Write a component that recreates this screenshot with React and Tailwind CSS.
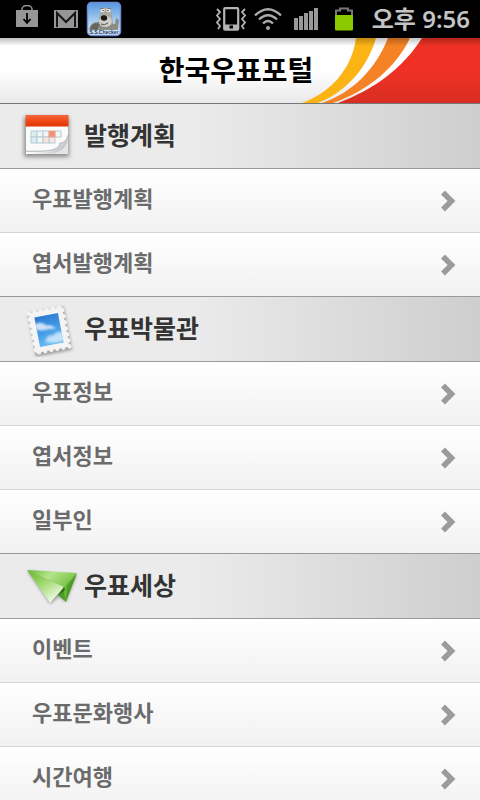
const sections = [
  { title: "발행계획", icon: CalendarIcon, items: ["우표발행계획", "엽서발행계획"] },
  { title: "우표박물관", icon: StampIcon, items: ["우표정보", "엽서정보", "일부인"] },
  { title: "우표세상", icon: PlaneIcon, items: ["이벤트", "우표문화행사", "시간여행"] },
];

function CalendarIcon() {
  return (
    <svg viewBox="0 0 56 56" className="size-14" aria-hidden="true">
      <defs>
        <linearGradient id="calTop" x1="0" y1="0" x2="0" y2="1">
          <stop offset="0" stopColor="#f4683f" />
          <stop offset="0.5" stopColor="#f04a18" />
          <stop offset="1" stopColor="#e23304" />
        </linearGradient>
        <linearGradient id="calCurl" x1="0" y1="0" x2="1" y2="0.4">
          <stop offset="0.4" stopColor="#ffffff" />
          <stop offset="1" stopColor="#c3c8ca" />
        </linearGradient>
        <filter id="calShadow" x="-20%" y="-20%" width="140%" height="150%">
          <feGaussianBlur stdDeviation="2" />
        </filter>
      </defs>
      <rect x="4" y="9" width="45" height="40" fill="#666" opacity="0.7" filter="url(#calShadow)" />
      <rect x="6" y="8" width="42" height="38" fill="#e3e6e7" />
      <path d="M6 18H48V31Q44 42 30 42H6Z" fill="#fafafa" />
      <path d="M6 43Q24 44 34 41Q40 39 40 35Q46 35 48 27V32Q45 46 24 46H6Z" fill="url(#calCurl)" />
      <path d="M6 43.500Q26 44 35 41Q40 39 40 35Q46 35 48 27" fill="none" stroke="#aeb6ba" strokeWidth="0.8" />
      <rect x="5.500" y="7" width="43" height="11.500" rx="0.5" fill="url(#calTop)" />
      <g fill="#f2f6f7" stroke="#b4cdd4" strokeWidth="1">
        <rect x="11" y="23" width="6" height="6" fill="#dbeef2" />
        <rect x="17" y="23" width="6" height="6" />
        <rect x="23" y="23" width="6" height="6" />
        <rect x="35" y="23" width="6" height="6" />
        <rect x="11" y="29" width="6" height="6" fill="#dbeef2" />
        <rect x="17" y="29" width="6" height="6" />
        <rect x="23" y="29" width="6" height="6" fill="#fae3dd" />
        <rect x="29" y="29" width="6" height="6" fill="#fae3dd" />
      </g>
      <rect x="29" y="23" width="6" height="6" fill="#f58f73" stroke="#e9a28e" strokeWidth="0.8" />
    </svg>
  );
}

function StampIcon() {
  return (
    <svg viewBox="0 0 56 56" className="size-14" aria-hidden="true">
      <defs>
        <linearGradient id="sky" x1="0" y1="0" x2="0.2" y2="1">
          <stop offset="0" stopColor="#2a78d0" />
          <stop offset="0.6" stopColor="#459ce6" />
          <stop offset="1" stopColor="#69bbf2" />
        </linearGradient>
        <filter id="stampShadow" x="-20%" y="-20%" width="140%" height="150%">
          <feGaussianBlur stdDeviation="1.8" />
        </filter>
        <filter id="cloud">
          <feGaussianBlur stdDeviation="0.9" />
        </filter>
        <clipPath id="skyClip">
          <rect x="17" y="14" width="24" height="30" />
        </clipPath>
      </defs>
      <g transform="rotate(-11 29 29)">
        <rect x="11" y="9" width="37" height="44" fill="#666" opacity="0.55" filter="url(#stampShadow)" />
        <rect x="12" y="9" width="34" height="40" fill="#f4f4f4" />
        <rect
          x="12"
          y="9"
          width="34"
          height="40"
          fill="none"
          stroke="#f4f4f4"
          strokeWidth="4.2"
          strokeLinecap="round"
          strokeDasharray="0.1 6.07"
        />
        <rect x="17" y="14" width="24" height="30" fill="url(#sky)" />
        <g clipPath="url(#skyClip)">
          <g fill="#fff" filter="url(#cloud)">
            <path d="M16 21Q23 18 27 24Q33 24 36 29L28 28Q21 29 16 26Z" opacity="0.75" />
            <path d="M23 40Q26 33 32 35Q36 31 42 34V42Q33 44 23 40Z" opacity="0.6" />
          </g>
        </g>
      </g>
    </svg>
  );
}

function PlaneIcon() {
  return (
    <svg viewBox="0 0 60 56" className="-mr-1 h-14 w-15" aria-hidden="true">
      <defs>
        <linearGradient id="wing" x1="0" y1="0" x2="1" y2="0.4">
          <stop offset="0" stopColor="#69b92e" />
          <stop offset="0.5" stopColor="#b4e58b" />
          <stop offset="1" stopColor="#7cc548" />
        </linearGradient>
        <linearGradient id="body" x1="0" y1="0" x2="0.7" y2="1">
          <stop offset="0" stopColor="#63b428" />
          <stop offset="0.5" stopColor="#a3db72" />
          <stop offset="1" stopColor="#f4fced" />
        </linearGradient>
        <filter id="planeShadow" x="-20%" y="-20%" width="140%" height="150%">
          <feGaussianBlur stdDeviation="1.8" />
        </filter>
      </defs>
      <path d="M7 13L57 17L46 44L39 39L30 46Z" fill="#555" opacity="0.5" filter="url(#planeShadow)" />
      <path d="M57 15L46 44L38 37L43 29Z" fill="#4d9c25" />
      <path d="M57 15L47 28L46 44L43 30Z" fill="#6cb73c" />
      <path d="M7 12L57 15L44 29Z" fill="url(#wing)" />
      <path d="M7 12L44 29L30 45Z" fill="url(#body)" />
      <path d="M44 29L45 32L38 38Z" fill="#276e0c" />
    </svg>
  );
}

function Swoosh() {
  return (
    <svg viewBox="0 0 180 65" preserveAspectRatio="none" className="h-full w-45" aria-hidden="true">
      <defs>
        <linearGradient id="red" x1="0" y1="0" x2="0" y2="1">
          <stop offset="0.5" stopColor="#ee3124" />
          <stop offset="1" stopColor="#d92e22" />
        </linearGradient>
      </defs>
      <path d="M56 0H76C68 28 48 53 18 65H2C32 54 52 30 56 0Z" fill="#fbb414" />
      <path d="M88 0H110C95 31 67 53 33 65H22C54 54 76 30 88 0Z" fill="#f58225" />
      <path d="M122 0H180V65H38C75 51 103 30 122 0Z" fill="url(#red)" />
    </svg>
  );
}

function StatusBar() {
  return (
    <div className="flex h-[38px] shrink-0 items-center justify-between bg-black pr-2.5 pl-4 text-[#c4c4c4]">
      <div className="flex items-center gap-4">
        <svg viewBox="0 0 22 28" className="h-7 w-[22px]" aria-label="다운로드">
          <path d="M6 6V4a5 3.500 0 0 1 10 0v2" fill="none" stroke="#969696" strokeWidth="1.5" />
          <path d="M0 5H22V22H0Z" fill="#969696" />
          <path d="M11 8V17M7.500 14L11 18L14.500 14" fill="none" stroke="#000" strokeWidth="1.8" />
        </svg>
        <svg viewBox="0 0 24 18" className="h-[18px] w-6" aria-label="메일">
          <rect width="24" height="18" fill="#969696" />
          <path d="M3 17V3L12 12L21 3V17" fill="none" stroke="#161616" strokeWidth="2" />
        </svg>
        <svg viewBox="0 0 36 36" className="-ml-2 size-9" aria-label="S.S.Checker">
          <defs>
            <linearGradient id="appBg" x1="0" y1="0" x2="0" y2="1">
              <stop offset="0" stopColor="#5797dd" />
              <stop offset="0.7" stopColor="#bcdcf5" />
              <stop offset="1" stopColor="#dcecf8" />
            </linearGradient>
          </defs>
          <rect x="1.500" y="1.500" width="33" height="33" rx="4" fill="url(#appBg)" stroke="#6b8ad6" strokeWidth="1.5" />
          <path d="M3 28Q5 20 13 21L25 22L29 23L30 17L33 19L32 29H3Z" fill="#8d8b86" />
          <path d="M4 28Q7 20 14 23L11 29Z" fill="#66645f" />
          <path d="M14 14Q13 7 19 7Q25 7 26 14L27 22Q22 28 14 24Q11 19 14 14Z" fill="#a9a7a2" />
          <path d="M13 19Q15 15 19 15Q25 15 26 20Q25 26 19 26Q13 26 13 19Z" fill="#cfcdc7" />
          <circle cx="16.500" cy="9" r="2.200" fill="#f2f2ee" />
          <circle cx="22.500" cy="9" r="2.200" fill="#f2f2ee" />
          <path d="M14 8L18 7M21 7L25 8" stroke="#6b6762" strokeWidth="1.2" />
          <circle cx="17" cy="9.500" r="0.700" fill="#222" />
          <circle cx="22" cy="9.500" r="0.700" fill="#222" />
          <ellipse cx="18" cy="17" rx="3.200" ry="2.800" fill="#191919" />
          <path d="M15 23Q18 25 22 22" fill="none" stroke="#555" strokeWidth="1" />
          <text x="18" y="33" textAnchor="middle" fontSize="5" fontWeight="700" fontFamily="Liberation Sans, sans-serif" fill="#23335e">
            S.S.Checker
          </text>
        </svg>
      </div>
      <div className="flex items-center">
        <svg viewBox="0 0 30 24" className="mr-2 h-6 w-[30px]" aria-label="진동">
          <rect x="8.200" y="1.200" width="14" height="21.500" rx="1" fill="none" stroke="#b4b4b4" strokeWidth="2.200" />
          <path d="M8 17.500H22.500V22.500H8Z" fill="#b4b4b4" />
          <rect x="13.500" y="18.500" width="3.500" height="3" fill="#000" />
          <path
            d="M1 2L4 5L1 8.500L4 12L1 15.500L4 19L2 22M29 2L26 5L29 8.500L26 12L29 15.500L26 19L28 22"
            fill="none"
            stroke="#b4b4b4"
            strokeWidth="1.800"
          />
        </svg>
        <svg viewBox="0 0 28 24" className="mr-3 h-6 w-7" aria-label="와이파이">
          <g fill="none" stroke="#a9a9a9" strokeWidth="2.400">
            <path d="M1 8.500Q14 -4 27 8.500" />
            <path d="M5 12.500Q14 4 23 12.500" />
            <path d="M9 16.500Q14 11.500 19 16.500" />
          </g>
          <circle cx="14" cy="21" r="2" fill="#a9a9a9" />
        </svg>
        <svg viewBox="0 0 24 22" className="mr-4 h-[22px] w-6" aria-label="신호">
          <path d="M0 10H4V22H0ZM5 8H9V22H5ZM10 5H14V22H10ZM15 3H19V22H15ZM20 0H24V22H20Z" fill="#999" />
        </svg>
        <svg viewBox="0 0 20 24" className="mr-[18px] h-6 w-5" aria-label="배터리">
          <path d="M2 9V3.500H6V1.500H14V3.500H18V9" fill="none" stroke="#777" strokeWidth="2" />
          <rect x="1" y="8" width="18" height="15.500" rx="1" fill="#8ac800" />
        </svg>
        <span className="text-2xl leading-8 font-semibold whitespace-nowrap">오후 9:56</span>
      </div>
    </div>
  );
}

function Chevron() {
  return (
    <svg viewBox="0 0 16 24" className="h-6 w-4" aria-hidden="true">
      <path d="M3 3.500L11.500 12L3 20.500" fill="none" stroke="#9b9b9b" strokeWidth="5.500" />
    </svg>
  );
}

const Section = ({ title, icon: Icon, items }) => (
  <section>
    <h2 className="flex h-[65px] items-center gap-1 border-b border-[#999] bg-linear-to-r from-[#ebebeb] from-40% to-[#cecece] pl-5 text-[25px] font-bold text-[#333]">
      <Icon />
      <span className="pl-1">{title}</span>
    </h2>
    <ul>
      {items.map((item) => (
        <li key={item} className="border-b border-[#d5d5d5] last:border-[#999]">
          <a
            href="#"
            className="flex h-[63px] items-center justify-between bg-linear-to-b from-white to-[#f1f1f1] pr-6 pl-8 text-[22px] font-bold text-[#6b6b6b]"
          >
            <span className="pb-1">{item}</span>
            <Chevron />
          </a>
        </li>
      ))}
    </ul>
  </section>
);

const App = () => {
  return (
    <div className="flex h-screen flex-col bg-white font-['Noto_Sans','Noto_Sans_CJK_KR',sans-serif]">
      <StatusBar />
      <header className="relative flex h-[66px] shrink-0 items-center justify-center border-b border-[#777] bg-linear-to-b from-white from-50% to-[#e9e9e9] pr-2 pb-0.5">
        <div className="absolute inset-y-0 right-0">
          <Swoosh />
        </div>
        <div className="absolute inset-x-0 top-0 h-2 bg-linear-to-b from-black/25 to-transparent" />
        <h1 className="relative text-[28px] font-bold text-black">한국우표포털</h1>
      </header>
      <main className="min-h-0 flex-1 overflow-y-auto [scrollbar-width:none]">
        {sections.map((section) => (
          <Section key={section.title} {...section} />
        ))}
      </main>
    </div>
  );
};

export default App;
